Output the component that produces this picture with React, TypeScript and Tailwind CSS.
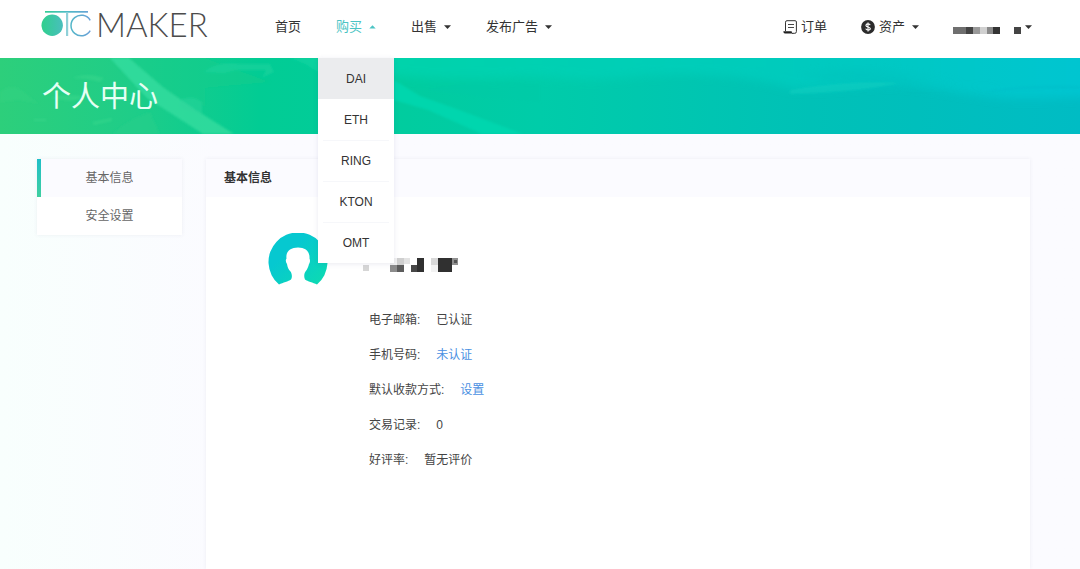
import type { ReactNode } from "react";

type BlockCell = { x: number; y: number; w: number; h: number; fill: string };

const accountBlocks: BlockCell[] = [
  { x: 0, y: 0, w: 13, h: 7, fill: "#6f6f6f" },
  { x: 13, y: 0, w: 7, h: 7, fill: "#444444" },
  { x: 20, y: 0, w: 7, h: 7, fill: "#999999" },
  { x: 27, y: 0, w: 7, h: 7, fill: "#d0d0d0" },
  { x: 34, y: 0, w: 6, h: 7, fill: "#8a8a8a" },
  { x: 40, y: 0, w: 7, h: 7, fill: "#333333" },
  { x: 61, y: 0, w: 7, h: 7, fill: "#444444" },
];

const nicknameBlocks: BlockCell[] = [
  { x: 0, y: 7, w: 6, h: 6, fill: "#d6d6d6" },
  { x: 27, y: 0, w: 7, h: 7, fill: "#f1f1f1" },
  { x: 34, y: 0, w: 7, h: 7, fill: "#cfcfcf" },
  { x: 41, y: 0, w: 6, h: 6, fill: "#e3e3e3" },
  { x: 27, y: 7, w: 7, h: 7, fill: "#8c8c8c" },
  { x: 34, y: 7, w: 7, h: 7, fill: "#5c5c5c" },
  { x: 48, y: 7, w: 6, h: 7, fill: "#474747" },
  { x: 54, y: 0, w: 7, h: 14, fill: "#303030" },
  { x: 68, y: 0, w: 7, h: 7, fill: "#d8d8d8" },
  { x: 68, y: 7, w: 7, h: 7, fill: "#f2f2f2" },
  { x: 75, y: 0, w: 14, h: 14, fill: "#303030" },
  { x: 89, y: 0, w: 6, h: 7, fill: "#909090" },
  { x: 91, y: 2, w: 3, h: 3, fill: "#555555" },
];

function Blocks({ cells, className }: { cells: BlockCell[]; className: string }) {
  const w = Math.max(...cells.map((c) => c.x + c.w));
  const h = Math.max(...cells.map((c) => c.y + c.h));
  return (
    <svg className={className} viewBox={`0 0 ${w} ${h}`} width={w} height={h} aria-hidden="true">
      {cells.map((c) => (
        <rect key={`${c.x}-${c.y}`} x={c.x} y={c.y} width={c.w} height={c.h} fill={c.fill} />
      ))}
    </svg>
  );
}

function Caret({ up = false }: { up?: boolean }) {
  return (
    <svg className="h-[4px] w-[7px] shrink-0" viewBox="0 0 7 4" aria-hidden="true">
      <path d={up ? "M0.3 3.5 3.5 0.2 6.7 3.5Z" : "M0 0.2H7L3.5 4Z"} fill="currentColor" />
    </svg>
  );
}

function Logo() {
  return (
    <a href="#home" className="flex h-full w-[234px] shrink-0 items-start pt-[10px] text-[#4c4c4c]">
      <svg className="h-[28px] w-[51px] shrink-0" viewBox="0 0 51 28" fill="none" aria-hidden="true">
        <defs>
          <linearGradient id="mark" gradientUnits="userSpaceOnUse" x1="0" y1="0" x2="50" y2="0">
            <stop offset="0" stopColor="#2fd08c" />
            <stop offset="0.5" stopColor="#4dbcc4" />
            <stop offset="1" stopColor="#6a9fd8" />
          </linearGradient>
        </defs>
        <circle cx="11.200" cy="15.300" r="10.700" fill="url(#mark)" />
        <rect x="4" y="1" width="43" height="1.700" fill="url(#mark)" />
        <rect x="25" y="2" width="2.200" height="24" fill="#8fd0d8" />
        <path d="M49.200 10.300A10.300 10.300 0 1 0 49.200 20.700" stroke="url(#mark)" strokeWidth="1.500" />
      </svg>
      <span className="ml-[4px] font-[Lato] text-[33px] leading-[28px] font-light">MAKER</span>
    </a>
  );
}

function OrderIcon() {
  return (
    <svg className="size-[14px] shrink-0" viewBox="0 0 14 14" fill="none" stroke="#333" aria-hidden="true">
      <path d="M2.500 11V2.200Q2.500 .7 4 .7H12.200Q13.400 .7 13.400 2V11.600Q13.400 13.300 11.800 13.300H9" strokeWidth="1" />
      <path d="M5 4.500H11M5 7.500H11" strokeWidth="0.900" />
      <path d="M.3 11.300H8.600Q8.600 13.500 10.500 13.600H2Q.4 13.400 .3 11.300Z" fill="#222" stroke="none" />
    </svg>
  );
}

function CoinIcon() {
  return (
    <svg className="size-[14px] shrink-0" viewBox="0 0 14 14" fill="none" aria-hidden="true">
      <circle cx="7" cy="7" r="6.900" fill="#2b2b2b" />
      <path
        d="M9.200 5.200C8.900 4.200 8 3.900 7 3.900 5.800 3.900 4.900 4.400 4.900 5.400 4.900 7.400 9.300 6.500 9.300 8.600 9.300 9.600 8.300 10.100 7.100 10.100 5.900 10.100 5 9.700 4.700 8.700M7 2.600V11.400"
        stroke="#fff"
        strokeWidth="1.100"
      />
    </svg>
  );
}

function AvatarIcon() {
  return (
    <svg className="h-[53px] w-[60px] shrink-0" viewBox="0 0 60 53" role="img" aria-label="头像">
      <defs>
        <linearGradient id="avatar" x1="0" y1="0" x2="1" y2="1">
          <stop offset="0.350" stopColor="#06c8d0" />
          <stop offset="1" stopColor="#0ddcb0" />
        </linearGradient>
      </defs>
      <path
        d="M11 51.500A29.500 29.500 0 1 1 49 51.500C45 49.500 39.500 48.500 37 46.500 35.800 44.500 36 40.500 37.500 38.500 39.500 36 40.300 33.500 41 31 42.500 28.500 42 26.500 41.500 25.500 42 18 37 14.500 30 14.500 23 14.500 17.500 18 18.500 25.500 17.500 26.500 17.500 29 19 31 19.500 34 20.500 36.500 22.500 38.500 24 40.500 24.500 44.500 23 46.500 20.500 48.500 15 49.500 11 51.500Z"
        fill="url(#avatar)"
      />
    </svg>
  );
}

function BannerArt() {
  return (
    <svg
      className="absolute inset-0 h-full w-full"
      viewBox="0 0 1080 76"
      preserveAspectRatio="none"
      aria-hidden="true"
    >
      <defs>
        <linearGradient id="base" x1="0" y1="0" x2="1" y2="0">
          <stop offset="0" stopColor="#2dcf7b" />
          <stop offset="0.120" stopColor="#1fcd88" />
          <stop offset="0.240" stopColor="#02cc94" />
          <stop offset="0.500" stopColor="#00cca9" />
          <stop offset="0.750" stopColor="#00c1b7" />
          <stop offset="1" stopColor="#00bcc4" />
        </linearGradient>
        <linearGradient id="sky" x1="0" y1="0" x2="1" y2="0">
          <stop offset="0" stopColor="#00d6b0" />
          <stop offset="0.550" stopColor="#04cfc0" />
          <stop offset="1" stopColor="#00c9d8" />
        </linearGradient>
        <filter id="soft" x="-10%" y="-40%" width="120%" height="180%">
          <feGaussianBlur stdDeviation="5" />
        </filter>
        <filter id="edge">
          <feGaussianBlur stdDeviation="0.900" />
        </filter>
      </defs>
      <rect width="1080" height="76" fill="url(#base)" />
      <path
        d="M380 -10H1100V38C1050 40 1010 42 985 38 950 34 930 28 890 26 850 28 820 32 790 30 750 18 700 14 640 18 590 24 560 20 530 18 480 22 430 22 380 16Z"
        fill="url(#sky)"
        opacity="0.700"
        filter="url(#soft)"
      />
      <path d="M800 18Q860 8 910 18T1010 32Q950 24 900 26T800 18Z" fill="#00bdb8" opacity="0.350" filter="url(#soft)" />
      <path d="M790 32Q850 22 900 25 860 34 790 36Z" fill="#14d2c2" opacity="0.450" filter="url(#edge)" />
      <path d="M985 34Q1020 26 1080 28V31Q1030 30 985 34Z" fill="#00bac6" opacity="0.350" filter="url(#edge)" />
      <g filter="url(#edge)">
        <path d="M130 0H205L270 24 205 30V48L178 42Z" fill="#12cd8c" opacity="0.500" />
        <path d="M110 0H129L164 30 196 52 234 76H203L147 40Z" fill="#34dc9d" opacity="0.850" />
        <path d="M180 42Q192 36 202 44V56L180 50Z" fill="#2bd69c" opacity="0.500" />
        <path d="M204 14Q216 3 240 6L270 6 274 14 262 20 266 12 236 12 224 15Z" fill="#22d6a0" opacity="0.500" />
        <path d="M290 0H318V14Q304 4 290 0Z" fill="#19d6a3" opacity="0.600" />
        <path d="M112 76Q130 60 150 54L160 76Z" fill="#24ce8b" opacity="0.600" />
        <path d="M72 20Q88 14 104 20L100 24Q86 20 72 20ZM50 40Q70 34 88 40L70 43ZM34 61H46V63H34ZM92 64L112 60V63L94 67Z" fill="#41dc90" opacity="0.350" />
        <path d="M0 34Q12 24 24 34T40 46L18 42 0 44Z" fill="#3cd486" opacity="0.300" />
        <path d="M394 22L420 38 454 50 523 76H482L428 52 394 42Z" fill="#00d8b0" opacity="0.800" />
        <path d="M428 32Q470 20 540 26V44Q480 40 428 32Z" fill="#00c9a5" opacity="0.350" />
      </g>
    </svg>
  );
}

const coins = ["DAI", "ETH", "RING", "KTON", "OMT"];

function NavButton({ children }: { children: ReactNode }) {
  return (
    <button type="button" className="flex cursor-pointer items-center gap-[7px] whitespace-nowrap">
      {children}
      <Caret />
    </button>
  );
}

function Header() {
  return (
    <header className="relative z-10 flex h-[58px] items-center bg-white pr-[48px] pl-[41px] text-[13px] leading-[20px] text-[#333]">
      <Logo />
      <nav aria-label="主导航" className="flex items-center gap-[35px] pb-[4px]">
        <a href="#home" className="whitespace-nowrap">首页</a>
        <div className="relative">
          <button
            type="button"
            aria-expanded="true"
            className="flex cursor-pointer items-center gap-[7px] whitespace-nowrap text-[#4cc4c4]"
          >
            购买
            <Caret up />
          </button>
          <ul className="absolute top-[41px] left-1/2 w-[76px] -translate-x-1/2 bg-white text-center text-[12px] shadow-[0_1px_5px_rgba(60,60,120,0.1)]">
            {coins.map((coin, i) => (
              <li key={coin} className={i === 0 ? "bg-[#ebecee]" : "px-[5px]"}>
                <a
                  href={`#buy-${coin}`}
                  className={
                    i > 1
                      ? "block h-[41px] border-t border-[#f6f7fa] leading-[40px]"
                      : "block h-[41px] leading-[42px]"
                  }
                >
                  {coin}
                </a>
              </li>
            ))}
          </ul>
        </div>
        <NavButton>出售</NavButton>
        <NavButton>发布广告</NavButton>
      </nav>
      <div className="ml-auto flex items-center gap-[34px] pb-[4px]">
        <a href="#orders" className="flex items-center gap-[4px] whitespace-nowrap">
          <OrderIcon />
          订单
        </a>
        <button type="button" className="flex cursor-pointer items-center gap-[7px] whitespace-nowrap">
          <span className="flex items-center gap-[4px]">
            <CoinIcon />
            资产
          </span>
          <Caret />
        </button>
        <button type="button" aria-label="账户" className="flex h-[20px] cursor-pointer items-center gap-[4px]">
          <Blocks cells={accountBlocks} className="mt-[7px] shrink-0" />
          <Caret />
        </button>
      </div>
    </header>
  );
}

type Detail = { label: string; value: string; href?: string };

const details: Detail[] = [
  { label: "电子邮箱:", value: "已认证" },
  { label: "手机号码:", value: "未认证", href: "#phone" },
  { label: "默认收款方式:", value: "设置", href: "#payment" },
  { label: "交易记录:", value: "0" },
  { label: "好评率:", value: "暂无评价" },
];

export default function App() {
  return (
    <div className="flex min-h-screen flex-col bg-linear-to-r from-[#f8fffd] to-[#fbfbff] to-20% font-['Liberation_Sans','Noto_Sans_CJK_SC',sans-serif]">
      <Header />
      <section className="relative flex h-[76px] shrink-0 items-center overflow-hidden bg-[#00cca0] px-[42px] pt-[2px]">
        <BannerArt />
        <h1 className="relative text-[29px] leading-[40px] font-normal text-[#e6fff4]">个人中心</h1>
      </section>
      <main className="flex grow gap-[24px] pt-[25px] pr-[50px] pl-[37px] text-[12px]">
        <aside className="w-[145px] shrink-0">
          <nav
            aria-label="个人中心"
            className="flex flex-col bg-white text-center leading-[38px] text-[#666] shadow-[0_0_4px_rgba(60,60,120,0.08)]"
          >
            <a href="#basic" aria-current="page" className="relative block bg-[#fbfbff]">
              <span className="absolute inset-y-0 left-0 w-[4px] bg-linear-to-b from-[#1fbfc8] to-[#3fcf9f]" />
              基本信息
            </a>
            <a href="#security" className="block">安全设置</a>
          </nav>
        </aside>
        <section className="min-w-0 grow bg-white shadow-[0_0_4px_rgba(60,60,120,0.08)]">
          <h2 className="bg-[#fbfbff] px-[18px] leading-[38px] font-bold text-[#333]">基本信息</h2>
          <div className="flex gap-[35px] px-[62px] pt-[36px] pb-[80px]">
            <AvatarIcon />
            <div className="pt-[25px]">
              <Blocks cells={nicknameBlocks} className="block" />
              <dl className="mt-[31px] ml-[6px] leading-[35px] text-[#444]">
                {details.map((d) => (
                  <div key={d.label} className="flex gap-[16px]">
                    <dt>{d.label}</dt>
                    <dd>
                      {d.href ? (
                        <a href={d.href} className="text-[#4a90e2]">{d.value}</a>
                      ) : (
                        d.value
                      )}
                    </dd>
                  </div>
                ))}
              </dl>
            </div>
          </div>
        </section>
      </main>
    </div>
  );
}
